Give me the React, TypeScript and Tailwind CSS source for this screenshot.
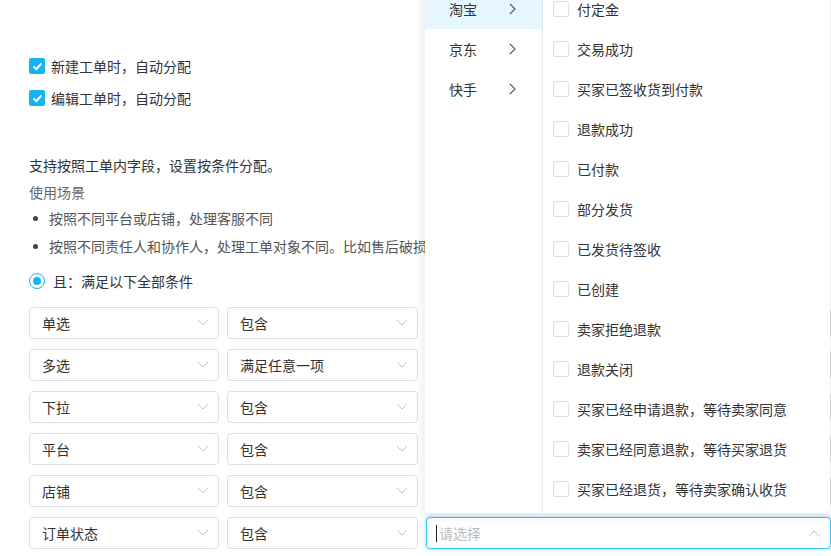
import React from "react";

const font = { fontFamily: '"Noto Sans CJK SC", "Noto Sans", sans-serif' };

function Chevron({ up = false }: { up?: boolean }) {
  return (
    <svg width="12" height="8" viewBox="0 0 12 8" className="shrink-0">
      <polyline
        points={up ? "1,7 6,2 11,7" : "1,1 6,6 11,1"}
        fill="none"
        stroke="#c0c4cc"
        strokeWidth="1"
      />
    </svg>
  );
}

function CheckedBox() {
  return (
    <span className="w-4 h-4 rounded-[2px] bg-[#14b4f5] flex items-center justify-center shrink-0">
      <svg width="11" height="9" viewBox="0 0 11 9">
        <polyline points="1.5,4.5 4.3,7 9.5,1.5" fill="none" stroke="#fff" strokeWidth="2" />
      </svg>
    </span>
  );
}

function Select({ value, w }: { value?: string; w: string }) {
  return (
    <div
      className={`${w} h-[32px] border border-[#dcdfe6] rounded-[4px] flex items-center justify-between pl-[12px] pr-[9px] bg-white text-[14px] text-[#333] shrink-0`}
    >
      <span>{value}</span>
      <Chevron />
    </div>
  );
}

const rows = [
  ["单选", "包含"],
  ["多选", "满足任意一项"],
  ["下拉", "包含"],
  ["平台", "包含"],
  ["店铺", "包含"],
];

const platforms = ["淘宝", "京东", "快手"];

const statuses = [
  "付定金",
  "交易成功",
  "买家已签收货到付款",
  "退款成功",
  "已付款",
  "部分发货",
  "已发货待签收",
  "已创建",
  "卖家拒绝退款",
  "退款关闭",
  "买家已经申请退款，等待卖家同意",
  "卖家已经同意退款，等待买家退货",
  "买家已经退货，等待卖家确认收货",
];

export default function App() {
  return (
    <div className="relative w-[831px] h-[556px] overflow-hidden bg-white" style={font}>
      <div className="pl-[29px] pt-[56px] text-[14px] text-[#333] whitespace-nowrap">
        <div className="flex flex-col gap-[12px]">
          <div className="flex items-center gap-[6px] h-[20px]">
            <CheckedBox />
            <span>新建工单时，自动分配</span>
          </div>
          <div className="flex items-center gap-[6px] h-[20px]">
            <CheckedBox />
            <span>编辑工单时，自动分配</span>
          </div>
        </div>

        <p className="mt-[47px] h-[20px] leading-[20px]">支持按照工单内字段，设置按条件分配。</p>
        <p className="mt-[7px] h-[20px] leading-[20px] text-[#666]">使用场景</p>
        <ul className="mt-[6px] text-[#555]">
          <li className="flex items-center h-[20px]">
            <span className="w-[5px] h-[5px] rounded-full bg-[#444] ml-[4px] mr-[11px]" />
            按照不同平台或店铺，处理客服不同
          </li>
          <li className="flex items-center h-[20px] mt-[8px]">
            <span className="w-[5px] h-[5px] rounded-full bg-[#444] ml-[4px] mr-[11px]" />
            按照不同责任人和协作人，处理工单对象不同。比如售后破损类工单分配给售后客服处理
          </li>
        </ul>

        <div className="mt-[15px] flex items-center gap-[8px] h-[20px]">
          <span className="w-4 h-4 rounded-full border-[1.5px] border-[#14b4f5] flex items-center justify-center">
            <span className="w-[8px] h-[8px] rounded-full bg-[#14b4f5]" />
          </span>
          <span>且：满足以下全部条件</span>
        </div>

        <div className="mt-[16px] flex flex-col gap-[10px]">
          {rows.map(([a, b]) => (
            <div key={a} className="flex gap-[8px]">
              <Select value={a} w="w-[190px]" />
              <Select value={b} w="w-[191px]" />
              <Select w="w-[405px]" />
            </div>
          ))}
          <div className="flex gap-[8px]">
            <Select value="订单状态" w="w-[190px]" />
            <Select value="包含" w="w-[191px]" />
            <div className="w-[405px] h-[32px] border border-[#3cc3f7] rounded-[4px] flex items-center justify-between pl-[9px] pr-[10px] bg-white shadow-[0_0_3px_1px_rgba(60,195,247,0.35)] shrink-0">
              <span className="flex items-center text-[14px] text-[#bbb]">
                <span className="w-px h-[17px] bg-[#222] mr-[2px]" />
                请选择
              </span>
              <Chevron up />
            </div>
          </div>
        </div>
      </div>

      {/* cascader popup */}
      <div className="absolute left-[425px] top-[-15px] w-[405px] h-[528px] bg-white rounded-[4px] shadow-[0_2px_12px_rgba(0,0,0,0.12)] flex text-[14px] text-[#333]">
        <div className="w-[118px] border-r border-[#e4e7ed] pt-[4px] pb-[4px]">
          {platforms.map((p, i) => (
            <div
              key={p}
              className={`h-[40px] flex items-center justify-between pl-[24px] pr-[26px] ${i === 0 ? "bg-[#e6f6fe]" : ""}`}
            >
              <span>{p}</span>
              <svg width="7" height="12" viewBox="0 0 7 12">
                <polyline points="1,1 6,6 1,11" fill="none" stroke="#555" strokeWidth="1.1" />
              </svg>
            </div>
          ))}
        </div>
        <div className="flex-1 pt-[4px]">
          {statuses.map((s) => (
            <div key={s} className="h-[40px] flex items-center pl-[10px] gap-[8px]">
              <span className="w-4 h-4 border border-[#dcdfe6] rounded-[2px] bg-white shrink-0" />
              <span>{s}</span>
            </div>
          ))}
        </div>
      </div>
    </div>
  );
}
